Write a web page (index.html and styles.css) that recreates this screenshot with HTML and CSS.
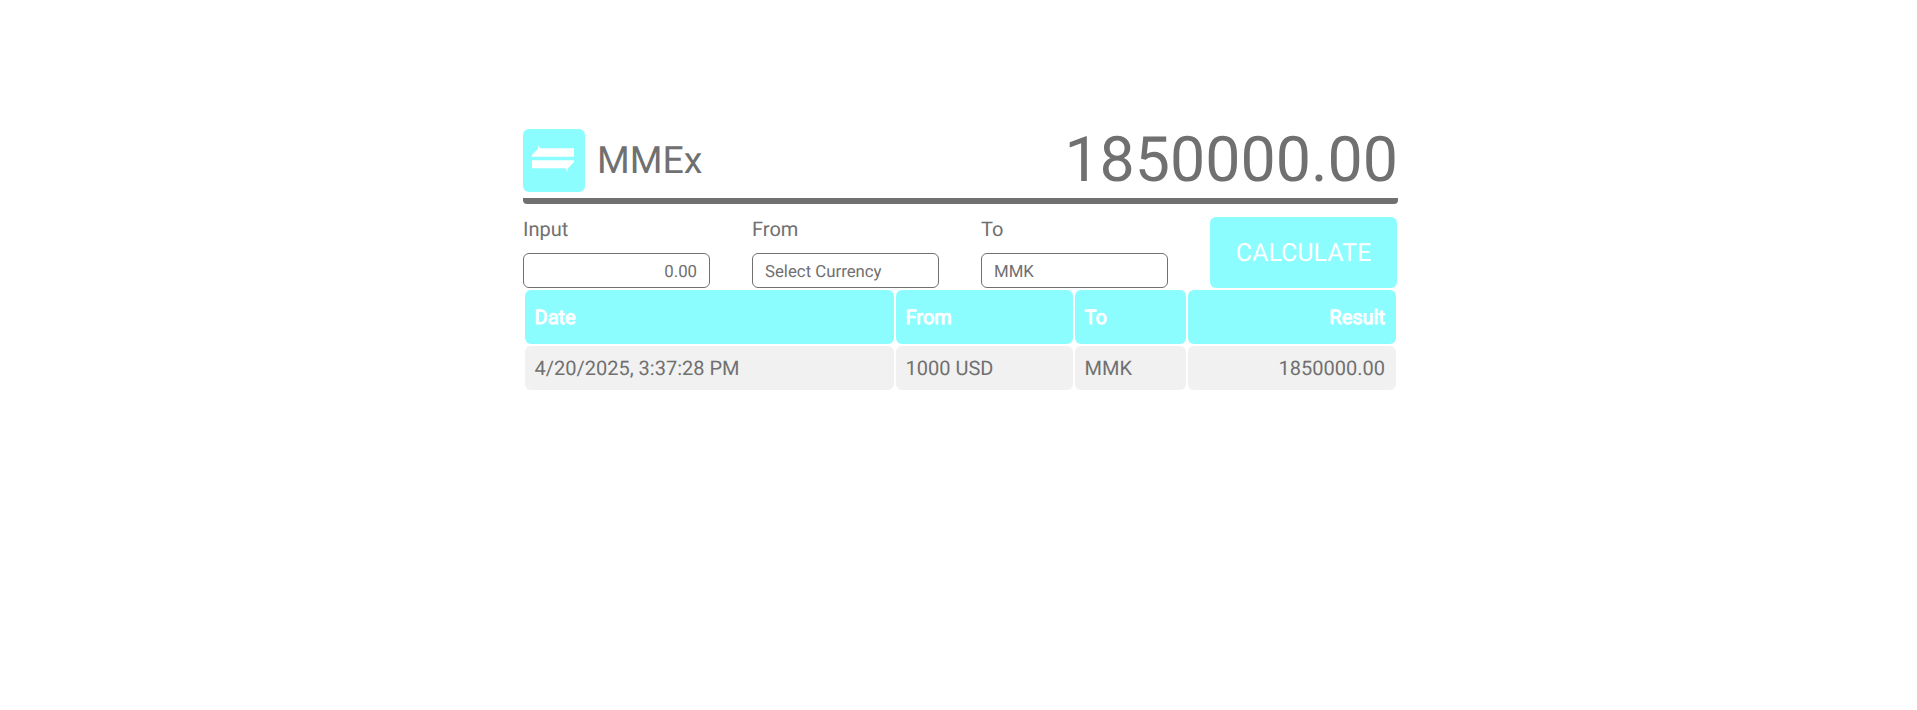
FILE: index.html
```html
<!DOCTYPE html>
<html lang="en">
<head>
    <meta charset="UTF-8">
    <meta name="viewport" content="width=device-width, initial-scale=1.0">
    <title>MMEx</title>
    <link rel="stylesheet" href="styles.css">
</head>
<body>
    <div class="app">
        <div class="header">
            <div class="brand">
                <div class="logo">
                    <svg class="logo-icon" width="42" height="27" viewBox="0 0 42 27">
                        <path d="M0 10 L6 3.8 L6.6 0 L8 3.3 H42 V11.7 H0 Z" fill="#ffffff"/>
                        <path d="M0 15.3 H42 V17 L36 23.3 L35 27 L34 23.3 H0 Z" fill="#ffffff"/>
                    </svg>
                </div>
                <span class="brand-name">MMEx</span>
            </div>
            <div class="total">1850000.00</div>
        </div>
        <div class="form-row">
            <div class="field">
                <label for="amount">Input</label>
                <input type="text" id="amount" class="amount" value="0.00">
            </div>
            <div class="field">
                <label for="from">From</label>
                <input type="text" id="from" value="Select Currency">
            </div>
            <div class="field">
                <label for="to">To</label>
                <input type="text" id="to" value="MMK">
            </div>
            <button type="button" class="calc-btn">CALCULATE</button>
        </div>
        <table class="history">
            <thead>
                <tr>
                    <th class="col-date">Date</th>
                    <th class="col-from">From</th>
                    <th class="col-to">To</th>
                    <th class="col-result">Result</th>
                </tr>
            </thead>
            <tbody>
                <tr>
                    <td>4/20/2025, 3:37:28 PM</td>
                    <td>1000 USD</td>
                    <td>MMK</td>
                    <td class="col-result">1850000.00</td>
                </tr>
            </tbody>
        </table>
    </div>
</body>
</html>
```

FILE: styles.css
```css
body {
    margin: 0;
    background-color: #ffffff;
    color: #707070;
    font-family: Roboto, "Liberation Sans", sans-serif;
    text-rendering: geometricPrecision;
}
.app {
    width: 875px;
    margin: 0 auto;
    padding: 129px 0 0 4px;
}
.header {
    display: flex;
    justify-content: space-between;
    align-items: center;
    height: 63px;
    padding-bottom: 6px;
    border-bottom: 6px solid #707070;
    border-radius: 0 0 4px 4px;
}
.brand {
    display: flex;
    align-items: center;
    gap: 12px;
}
.logo {
    width: 62px;
    height: 63px;
    background-color: #8bfdff;
    border-radius: 6px;
    display: flex;
    align-items: center;
    justify-content: center;
}
.logo-icon {
    margin: 0 2px 4px 0;
}
.brand-name {
    font-size: 37.5px;
}
.total {
    font-size: 62.7px;
    line-height: 63px;
}
.form-row {
    display: flex;
    gap: 42px;
    align-items: stretch;
    margin-top: 13px;
}
.field {
    width: 187px;
    display: flex;
    flex-direction: column;
    justify-content: space-between;
}
.field label {
    font-size: 20px;
    line-height: 24px;
}
.field input {
    width: 100%;
    height: 35px;
    box-sizing: border-box;
    padding: 2px 12px 0;
    border: 1px solid #707070;
    border-radius: 6px;
    background-color: #ffffff;
    color: #707070;
    font-family: inherit;
    font-size: 16.8px;
    text-rendering: geometricPrecision;
}
.field .amount {
    text-align: right;
}
.calc-btn {
    width: 187px;
    height: 71px;
    padding: 1px 0 0;
    border: none;
    border-radius: 6px;
    background-color: #8bfdff;
    color: #ffffff;
    font-family: inherit;
    font-size: 25px;
    text-rendering: geometricPrecision;
}
.history {
    width: 875px;
    table-layout: fixed;
    border-collapse: separate;
    border-spacing: 2px;
}
.history th,
.history td {
    padding: 0 11px 0 9.5px;
    border-radius: 6px;
    font-size: 20px;
    text-align: left;
}
.history th {
    height: 54px;
    background-color: #8bfdff;
    color: #ffffff;
    font-weight: 400;
    -webkit-text-stroke: 0.9px #ffffff;
}
.history td {
    height: 44px;
    background-color: #f1f1f1;
}
.history .col-date {
    width: 348.5px;
}
.history .col-from {
    width: 156.5px;
}
.history .col-to {
    width: 90.5px;
}
.history .col-result {
    text-align: right;
}
```
